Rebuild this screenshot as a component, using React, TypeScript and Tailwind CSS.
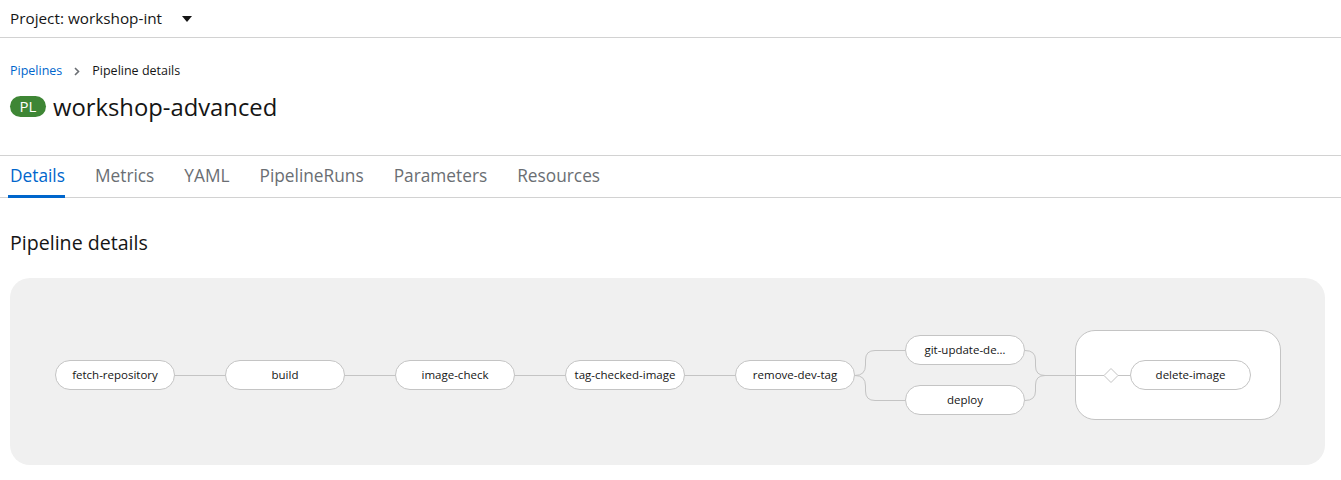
import React from "react";

const font = { fontFamily: '"Open Sans", "Noto Sans", sans-serif' };

function Node({ label, left, top, width = 120 }: { label: string; left: number; top: number; width?: number }) {
  return (
    <div
      className="absolute flex h-[30px] items-center justify-center rounded-full border border-[#c4c4c4] bg-white text-[11.5px] text-[#151515]"
      style={{ left, top, width }}
    >
      {label}
    </div>
  );
}

export default function App() {
  return (
    <div className="min-h-[480px] bg-white text-[#151515]" style={font}>
      {/* project bar */}
      <div className="flex h-[38px] items-center border-b border-[#d2d2d2] px-[10px]">
        <span className="text-[15.3px] text-[#151515]">Project: workshop-int</span>
        <svg className="ml-[20px]" width="10" height="6" viewBox="0 0 10 6">
          <path d="M0 0 L10 0 L5 6 Z" fill="#151515" />
        </svg>
      </div>

      {/* page header */}
      <div className="px-[10px] pt-[24px]">
        <div className="flex items-center text-[12.5px]">
          <span className="text-[#0066cc]">Pipelines</span>
          <svg className="mx-[12px]" width="6" height="9" viewBox="0 0 6 9">
            <path d="M1 1 L4.5 4.5 L1 8" stroke="#6a6e73" strokeWidth="1.6" fill="none" />
          </svg>
          <span className="text-[#151515]">Pipeline details</span>
        </div>
        <div className="mt-[11px] flex items-center">
          <span className="flex h-[21px] w-[36px] items-center justify-center rounded-full bg-[#3e8635] text-[15px] leading-none text-white">
            PL
          </span>
          <span className="ml-[7px] text-[23.8px] leading-[30px] text-[#151515]">workshop-advanced</span>
        </div>
      </div>

      {/* tabs */}
      <div className="mt-[33px] flex h-[43px] border-y border-[#d2d2d2] px-[10px]">
        <div className="flex gap-[30px]">
          {["Details", "Metrics", "YAML", "PipelineRuns", "Parameters", "Resources"].map((t, i) => (
            <div key={t} className="relative flex items-center text-[17.3px]">
              <span className={i === 0 ? "text-[#0066cc]" : "text-[#6a6e73]"}>{t}</span>
              {i === 0 && <span className="absolute bottom-[-1px] left-[-2px] right-0 h-[3px] bg-[#0066cc]" />}
            </div>
          ))}
        </div>
      </div>

      {/* section */}
      <div className="px-[10px]">
        <h2 className="mt-[32px] text-[19.6px] leading-[26px] text-[#151515]">Pipeline details</h2>
        <div className="relative mt-[22px] h-[187px] w-[1315px] rounded-[20px] bg-[#f0f0f0]">
          <div className="absolute left-[1065px] top-[52px] h-[90px] w-[206px] rounded-[20px] border border-[#c4c4c4] bg-white" />
          <svg className="absolute left-0 top-0" width="1315" height="187" viewBox="0 0 1315 187" fill="none">
            <g stroke="#c4c4c4" strokeWidth="1">
              <path d="M165 97.5 H215" />
              <path d="M335 97.5 H385" />
              <path d="M505 97.5 H555" />
              <path d="M675 97.5 H725" />
              <path d="M845 97.5 Q855.5 97.5 855.5 87 V82 Q855.5 72.5 865 72.5 H895" />
              <path d="M845 97.5 Q855.5 97.5 855.5 108 V113 Q855.5 122.5 865 122.5 H895" />
              <path d="M1015 72.5 Q1025.5 72.5 1025.5 82 V88 Q1025.5 97.5 1035 97.5 H1094" />
              <path d="M1015 122.5 Q1025.5 122.5 1025.5 113 V107 Q1025.5 97.5 1035 97.5" />
              <path d="M1094 97.5 L1101 90.5 L1108 97.5 L1101 104.5 Z" fill="#ffffff" />
              <path d="M1108 97.5 H1120" />
            </g>
          </svg>
          <Node label="fetch-repository" left={45} top={82} />
          <Node label="build" left={215} top={82} />
          <Node label="image-check" left={385} top={82} />
          <Node label="tag-checked-image" left={555} top={82} />
          <Node label="remove-dev-tag" left={725} top={82} />
          <Node label="git-update-de…" left={895} top={57} />
          <Node label="deploy" left={895} top={107} />
          <Node label="delete-image" left={1120} top={82} width={121} />
        </div>
      </div>
    </div>
  );
}
